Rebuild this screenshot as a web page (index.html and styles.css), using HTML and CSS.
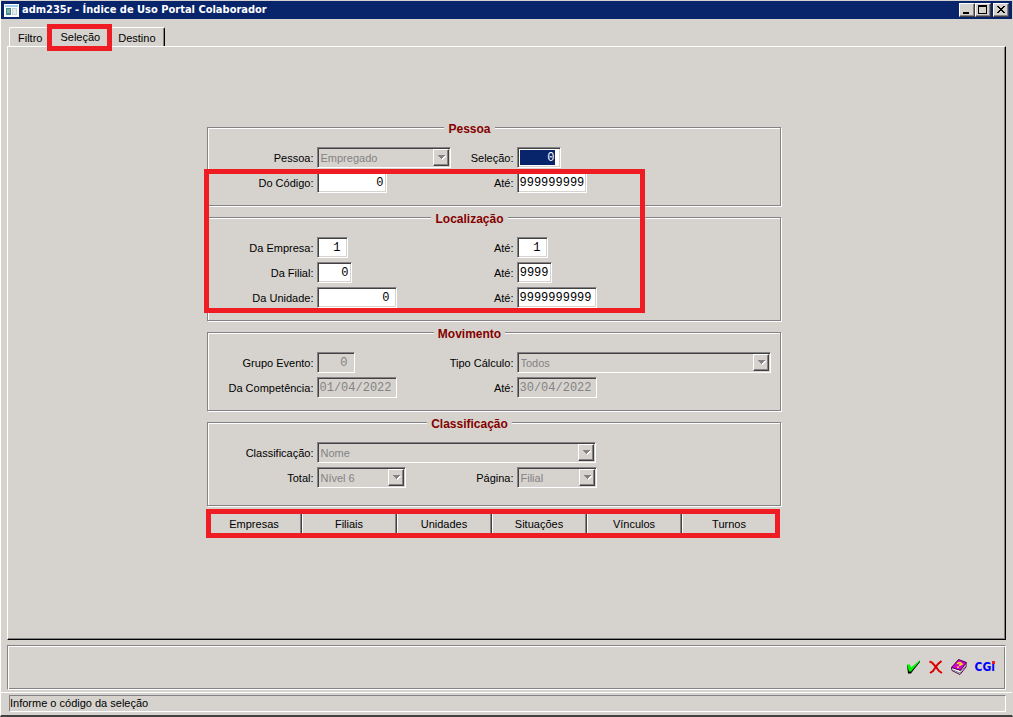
FILE: index.html
```html
<!DOCTYPE html>
<html lang="pt-BR">
<head>
<meta charset="utf-8">
<title>adm235r - Índice de Uso Portal Colaborador</title>
<link rel="stylesheet" href="styles.css">
</head>
<body>
<div class="window">
  <header class="titlebar">
    <svg class="app-icon" width="15" height="13" viewBox="0 0 15 13" shape-rendering="crispEdges">
      <path fill="#fff" d="M0 0h15v13H0z"/><path fill="#9ccfef" d="M1 1h13v2H1z"/>
      <path fill="#4a8a8c" d="M2 4h5v7H2z"/><path fill="#7bb69c" d="M3 5h3v4H3z"/>
      <path fill="#c6cfd6" d="M8 4h5v7H8z"/><path fill="#e7ebef" d="M9 5h3v5H9z"/>
    </svg>
    <h1 class="title">adm235r - Índice de Uso Portal Colaborador</h1>
    <div class="win-buttons">
      <button class="win-btn" aria-label="Minimizar"><svg width="12" height="11" viewBox="0 0 12 11" shape-rendering="crispEdges"><path d="M3 8h6v2H3z"/></svg></button>
      <button class="win-btn" aria-label="Maximizar"><svg width="12" height="11" viewBox="0 0 12 11" shape-rendering="crispEdges"><path fill-rule="evenodd" d="M2 1h9v9H2zM3 3v6h7V3z"/></svg></button>
      <button class="win-btn close" aria-label="Fechar"><svg width="12" height="11" viewBox="0 0 12 11" shape-rendering="crispEdges"><path d="M3 2h2v1h1v1h2V3h1V2h2v1h-1v1H9v1H8v1h1v1h1v1h1v1H9V8H8V7H6v1H5v1H3V8h1V7h1V6h1V5H5V4H4V3H3z"/></svg></button>
    </div>
  </header>

  <main class="content">
    <div class="tabs" role="tablist">
      <button class="tab first" role="tab">Filtro</button>
      <button class="tab active" role="tab" aria-selected="true">Seleção</button>
      <button class="tab last" role="tab">Destino</button>
    </div>
    <section class="panel">
      <form class="form">
        <div class="marked-groups">
          <fieldset class="group">
            <legend class="legend">Pessoa</legend>
            <div class="fields">
              <label for="pessoa">Pessoa:</label>
              <span class="combo w-person"><select id="pessoa" disabled><option>Empregado</option></select><svg class="arrow" viewBox="0 0 14 15" shape-rendering="crispEdges"><path fill="#fff" d="M5 6h7v1h-1v1h-1v1H9v1H8z"/><path fill="#848284" d="M4 5h7v1h-1v1H9v1H8v1H7V8H6V7H5V6H4z"/></svg></span>
              <label for="selecao">Seleção:</label>
              <input id="selecao" class="w-select pad selected" value="0">
              <label for="codigo">Do Código:</label>
              <input id="codigo" class="w-code" value="0">
              <label for="codigo2">Até:</label>
              <input id="codigo2" class="w-code" value="999999999">
            </div>
          </fieldset>
          <fieldset class="group">
            <legend class="legend">Localização</legend>
            <div class="fields">
              <label for="empresa">Da Empresa:</label>
              <input id="empresa" class="w-company pad" value="1">
              <label for="empresa2">Até:</label>
              <input id="empresa2" class="w-company pad" value="1">
              <label for="filial">Da Filial:</label>
              <input id="filial" class="w-branch" value="0">
              <label for="filial2">Até:</label>
              <input id="filial2" class="w-branch" value="9999">
              <label for="unidade">Da Unidade:</label>
              <input id="unidade" class="w-unit pad" value="0">
              <label for="unidade2">Até:</label>
              <input id="unidade2" class="w-unit start" value="9999999999">
            </div>
          </fieldset>
          <span class="mark-groups"></span>
        </div>
        <fieldset class="group">
          <legend class="legend">Movimento</legend>
          <div class="fields">
            <label for="grupo">Grupo Evento:</label>
            <input id="grupo" class="w-event pad" value="0" disabled>
            <label for="tipo">Tipo Cálculo:</label>
            <span class="combo w-type"><select id="tipo" disabled><option>Todos</option></select><svg class="arrow" viewBox="0 0 14 15" shape-rendering="crispEdges"><path fill="#fff" d="M5 6h7v1h-1v1h-1v1H9v1H8z"/><path fill="#848284" d="M4 5h7v1h-1v1H9v1H8v1H7V8H6V7H5V6H4z"/></svg></span>
            <label for="comp">Da Competência:</label>
            <input id="comp" class="w-unit start" value="01/04/2022" disabled>
            <label for="comp2">Até:</label>
            <input id="comp2" class="w-unit start" value="30/04/2022" disabled>
          </div>
        </fieldset>
        <fieldset class="group tall">
          <legend class="legend">Classificação</legend>
          <div class="fields">
            <label for="classif">Classificação:</label>
            <span class="combo w-order"><select id="classif" disabled><option>Nome</option></select><svg class="arrow" viewBox="0 0 14 15" shape-rendering="crispEdges"><path fill="#fff" d="M5 6h7v1h-1v1h-1v1H9v1H8z"/><path fill="#848284" d="M4 5h7v1h-1v1H9v1H8v1H7V8H6V7H5V6H4z"/></svg></span>
            <label for="total">Total:</label>
            <span class="combo w-total"><select id="total" disabled><option>Nível 6</option></select><svg class="arrow" viewBox="0 0 14 15" shape-rendering="crispEdges"><path fill="#fff" d="M5 6h7v1h-1v1h-1v1H9v1H8z"/><path fill="#848284" d="M4 5h7v1h-1v1H9v1H8v1H7V8H6V7H5V6H4z"/></svg></span>
            <label for="pagina">Página:</label>
            <span class="combo w-unit"><select id="pagina" disabled><option>Filial</option></select><svg class="arrow" viewBox="0 0 14 15" shape-rendering="crispEdges"><path fill="#fff" d="M5 6h7v1h-1v1h-1v1H9v1H8z"/><path fill="#848284" d="M4 5h7v1h-1v1H9v1H8v1H7V8H6V7H5V6H4z"/></svg></span>
          </div>
        </fieldset>
        <div class="actions">
          <button type="button">Empresas</button>
          <button type="button">Filiais</button>
          <button type="button">Unidades</button>
          <button type="button">Situações</button>
          <button type="button">Vínculos</button>
          <button type="button">Turnos</button>
        </div>
      </form>
    </section>
    <div class="toolbar">
      <button class="tool" aria-label="Confirmar"><svg width="14" height="14" viewBox="0 0 14 14">
        <path fill="#000" d="M0 5h2l2 4 9-8.500V2L5 12l-1 1.500H1z"/>
        <path fill="#00f700" d="M0 4.500h3l1 3L12.500 0.500 13 1 4 11.500H2z"/></svg></button>
      <button class="tool" aria-label="Cancelar"><svg width="14" height="14" viewBox="0 0 14 14">
        <path fill="none" stroke="#e70000" stroke-width="2" d="M0.500 1.500L3 2.500l4 4.500 3 4 3 2"/><path fill="none" stroke="#d60000" stroke-width="2" d="M12.500 1L9 4l-3 4-2 3-3 2"/></svg></button>
      <button class="tool" aria-label="Ajuda"><svg width="16" height="16" viewBox="0 0 16 16">
        <path fill="#fff" stroke="#4a004a" d="M0.500 8.500l0.500 3 8 4 6-7.500V4z"/><path fill="none" stroke="#848284" d="M2 11l7 3 5.500-7"/>
        <path fill="#d600d6" stroke="#4a004a" d="M7.500 0.500l8 3-6 8-9-3z"/>
        <path fill="none" stroke="#ffef00" stroke-width="1.500" d="M6 4.500l3-1 2 1.500-3 1.500"/><path fill="#ffef00" d="M6 7.500h2v1.500H6z"/></svg></button>
      <button class="tool brand" aria-label="CGi">CG<span class="brand-i">i</span></button>
    </div>
  </main>
  <footer class="statusbar"><p class="status">Informe o código da seleção</p></footer>
</div>
</body>
</html>
```
FILE: styles.css
```css
* { box-sizing: border-box; }

body {
  margin: 0;
  background: #d6d3ce;
  color: #000;
  font: 11px/14px "Liberation Sans", Arial, sans-serif;
}

button, input, select { font: inherit; color: inherit; margin: 0; border-radius: 0; }

.window {
  min-height: 100vh;
  display: flex;
  flex-direction: column;
  border: 1px solid #d6d3ce;
  border-left-color: #fff;
  border-bottom: 2px solid #424142;
}

.titlebar {
  display: flex;
  align-items: center;
  height: 18px;
  padding: 0 3px;
  background: #08246b;
}
.app-icon { flex: none; }
.title {
  flex: 1;
  margin: 0 0 0 3px;
  color: #fff;
  font: bold 11px/16px "DejaVu Sans Condensed", "Noto Sans", sans-serif;
}
.win-buttons { display: flex; }
.win-btn {
  display: flex;
  width: 16px;
  height: 14px;
  padding: 0;
  background: #d6d3ce;
  border: 1px solid;
  border-color: #fff #424142 #424142 #fff;
  box-shadow: inset -1px -1px #848284;
}
.close { margin-left: 2px; }

.content {
  flex: 1;
  display: flex;
  flex-direction: column;
  padding: 6px 6px 0;
}
.tabs {
  display: flex;
  align-items: flex-end;
  height: 21px;
  padding-left: 2px;
}
.tab {
  height: 19px;
  padding: 2px 6px 0;
  background: #d6d3ce;
  border: 0 solid #fff;
  border-top-width: 1px;
}
.first { border-left-width: 1px; border-top-left-radius: 2px; padding-left: 8px; }
.active { position: relative; height: 21px; padding: 1px 12px 0; }
.last {
  border-right: 1px solid #000;
  box-shadow: inset -1px 0 #848284;
  border-top-right-radius: 2px;
  padding-right: 8px;
}
.active::after {
  content: "";
  position: absolute;
  inset: -2px 0 -5px -1px;
  border: 5px solid #ef1c24;
  z-index: 1;
}

.panel {
  flex: 1;
  display: flex;
  justify-content: center;
  padding: 69px 26px 20px 0;
  border: 1px solid #fff;
  border-right-color: #000;
  border-bottom-color: #000;
  box-shadow: inset -1px -1px #848284;
}
.form { width: 574px; }
.marked-groups { position: relative; }
.mark-groups {
  position: absolute;
  inset: 51px 136px 8px -3px;
  border: 5px solid #ef1c24;
  pointer-events: none;
}

.group {
  min-width: 0;
  margin: 2px 0 0;
  padding: 11px 48px 12px 0;
  border: 1px solid #848284;
  box-shadow: inset 1px 1px #fff, 1px 1px #fff;
}
.tall { padding-bottom: 17px; }
.legend {
  height: 18px;
  margin: 0 auto;
  padding: 4px 4px 0;
  background: #d6d3ce;
  color: #840000;
  font-size: 12px;
  line-height: 14px;
  font-weight: bold;
}
.fields {
  display: grid;
  grid-template-columns: 106px 131px 63px 254px;
  gap: 4px 3px;
  align-items: center;
}
.fields label { justify-self: end; white-space: nowrap; }

.fields input, .combo {
  height: 21px;
  border: 1px solid;
  border-color: #848284 #fff #fff #848284;
  box-shadow: inset 1px 1px #424142, inset -1px -1px #d6d3ce;
}
.fields input {
  padding: 0 2px;
  background: #fff;
  font: 12px/14px "Liberation Mono", "Courier New", monospace;
  text-align: right;
  outline: none;
}
.fields .pad { padding-right: 6px; }
.fields .start { text-align: left; }
.fields input:disabled { background: #d6d3ce; color: #848284; }
.fields .selected {
  padding: 2px 5px 2px 2px;
  color: #fff;
  background: linear-gradient(#08246b, #08246b) content-box, #fff;
}

.combo { position: relative; display: block; }
.combo select {
  appearance: none;
  display: block;
  width: 100%;
  height: 100%;
  padding: 1px 18px 0 3px;
  border: 0;
  background: none;
  color: #848284;
  opacity: 1;
}
.arrow {
  position: absolute;
  top: 1px;
  right: 1px;
  width: 16px;
  height: 17px;
  background: #d6d3ce;
  border: 1px solid;
  border-color: #fff #424142 #424142 #fff;
  box-shadow: inset -1px -1px #848284;
}

.w-person { width: 134px; }
.w-select { width: 44px; }
.w-code { width: 70px; }
.w-company { width: 31px; }
.w-branch { width: 35px; }
.w-unit { width: 80px; }
.w-event { width: 38px; }
.w-type { width: 254px; }
.w-order { width: 279px; grid-column: 2 / -1; }
.w-total { width: 89px; }

.actions {
  position: relative;
  display: grid;
  grid-template-columns: repeat(6, 1fr);
  margin: 4px 4px 0 0;
  height: 27px;
}
.actions::after {
  content: "";
  position: absolute;
  inset: -1px -3px -1px -1px;
  border: 5px solid #ef1c24;
  pointer-events: none;
}
.actions button {
  padding: 0;
  background: #d6d3ce;
  border: 1px solid;
  border-color: #fff #424142 #424142 #fff;
  box-shadow: inset -1px -1px #848284;
}

.toolbar {
  display: flex;
  justify-content: flex-end;
  align-items: center;
  gap: 8px;
  height: 45px;
  margin: 5px 0 2px;
  padding: 0 10px 2px 0;
  border: 1px solid #848284;
  border-right-color: #fff;
  border-bottom-color: #fff;
  box-shadow: inset 1px 1px #fff, inset -1px -1px #848284;
}
.tool { display: flex; padding: 0; background: none; border: 0; }
.brand {
  color: #0000ff;
  font: bold 12px/14px "Liberation Sans Narrow", "DejaVu Sans Condensed", sans-serif;
}
.brand-i { position: relative; }
.brand-i::after {
  content: "";
  position: absolute;
  top: 1px;
  right: 0;
  width: 3px;
  height: 3px;
  background: #ef1c24;
}

.statusbar { padding: 2px 6px 3px 8px; border-top: 1px solid #fff; }
.status {
  margin: 0;
  height: 17px;
  line-height: 15px;
  border: 1px solid;
  border-color: #848284 #fff #fff #848284;
}
```
